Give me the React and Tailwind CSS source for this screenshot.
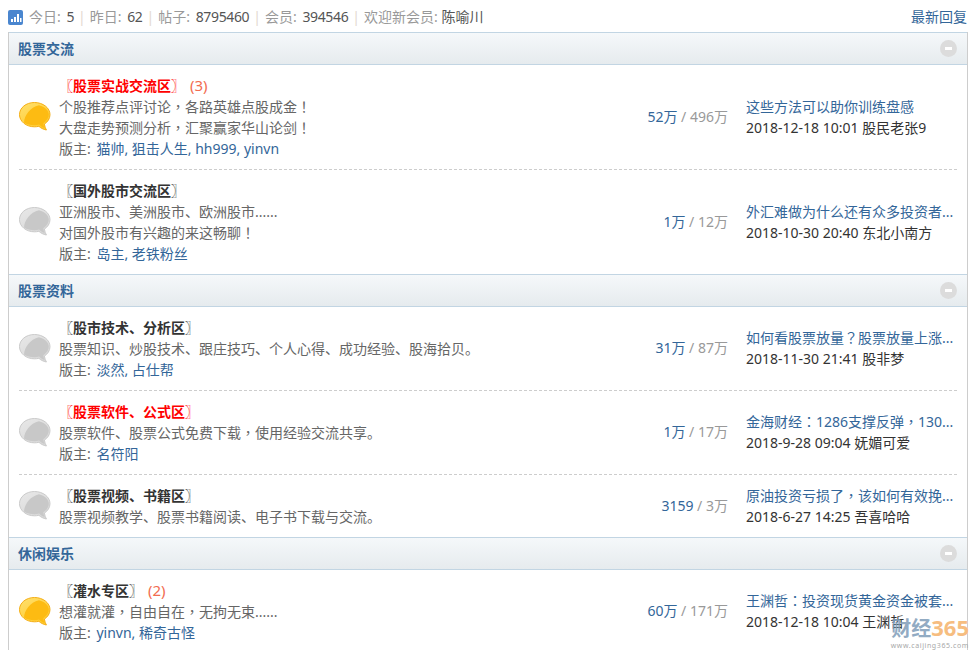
import React from "react";

const FONT = "font-['Noto_Sans','Noto_Sans_CJK_SC',sans-serif]";

const sections = [
  {
    name: "股票交流",
    forums: [
      {
        title: "〖股票实战交流区〗",
        red: true,
        today: "(3)",
        hot: true,
        desc: ["个股推荐点评讨论，各路英雄点股成金！", "大盘走势预测分析，汇聚赢家华山论剑！"],
        mods: "猫帅, 狙击人生, hh999, yinvn",
        threads: "52万",
        posts: "496万",
        last: "这些方法可以助你训练盘感",
        when: "2018-12-18 10:01",
        by: "股民老张9",
      },
      {
        title: "〖国外股市交流区〗",
        desc: ["亚洲股市、美洲股市、欧洲股市......", "对国外股市有兴趣的来这畅聊！"],
        mods: "岛主, 老铁粉丝",
        threads: "1万",
        posts: "12万",
        last: "外汇难做为什么还有众多投资者...",
        when: "2018-10-30 20:40",
        by: "东北小南方",
      },
    ],
  },
  {
    name: "股票资料",
    forums: [
      {
        title: "〖股市技术、分析区〗",
        desc: ["股票知识、炒股技术、跟庄技巧、个人心得、成功经验、股海拾贝。"],
        mods: "淡然, 占仕帮",
        threads: "31万",
        posts: "87万",
        last: "如何看股票放量？股票放量上涨...",
        when: "2018-11-30 21:41",
        by: "股非梦",
      },
      {
        title: "〖股票软件、公式区〗",
        red: true,
        desc: ["股票软件、股票公式免费下载，使用经验交流共享。"],
        mods: "名符阳",
        threads: "1万",
        posts: "17万",
        last: "金海财经：1286支撑反弹，130...",
        when: "2018-9-28 09:04",
        by: "妩媚可爱",
      },
      {
        title: "〖股票视频、书籍区〗",
        desc: ["股票视频教学、股票书籍阅读、电子书下载与交流。"],
        threads: "3159",
        posts: "3万",
        last: "原油投资亏损了，该如何有效挽...",
        when: "2018-6-27 14:25",
        by: "吾喜哈哈",
      },
    ],
  },
  {
    name: "休闲娱乐",
    forums: [
      {
        title: "〖灌水专区〗",
        today: "(2)",
        hot: true,
        desc: ["想灌就灌，自由自在，无拘无束......"],
        mods: "yinvn, 稀奇古怪",
        threads: "60万",
        posts: "171万",
        last: "王渊哲：投资现货黄金资金被套...",
        when: "2018-12-18 10:04",
        by: "王渊哲",
      },
    ],
  },
];

const stats = [
  ["今日", "5"],
  ["昨日", "62"],
  ["帖子", "8795460"],
  ["会员", "394546"],
];

// the reference centres full-width punctuation in its cell, the TC face does too
function Cjk({ text }) {
  return text.split(/([，！？：])/).map((part, i) =>
    i % 2 ? (
      <span key={i} className="font-['Noto_Sans_CJK_TC']">
        {part}
      </span>
    ) : (
      part
    )
  );
}

function Bubble({ hot, id }) {
  const edge = hot ? "#f5ae14" : "#cacaca";
  const light = hot ? "#ffe06e" : "#e8e8e8";
  const mid = hot ? "#ffcb2e" : "#d8d8d8";
  const fill = hot ? "#fdbb12" : "#c8c8c8";
  return (
    <svg width="32" height="29" viewBox="0 0 32 29" className="block">
      <defs>
        <linearGradient id={id} x1="0" y1="0" x2="0.6" y2="1">
          <stop offset="0" stopColor={light} />
          <stop offset="1" stopColor={mid} />
        </linearGradient>
      </defs>
      <path
        d="M15.5 .5C24 .5 31 6 31 12.6c0 3.900-2.300 7.300-5.600 9.500.3 2.200 1 4.300 2 5.900-3-.6-5.700-2-7.500-3.700-1.400.3-2.900.5-4.400.5C7 24.800.5 19.300.5 12.600S7 .5 15.500.5z"
        fill={`url(#${id})`}
        stroke={edge}
      />
      <path
        d="M5 20.500C5.500 13 11 5.500 20 3.200 26 4.800 29.800 8.500 29.800 12.600c0 3.500-2.200 6.500-5.500 8.600.2 1.800.6 3.400 1.200 4.800-2.300-.7-4.100-1.900-5.400-3.400-1.500.4-3 .6-4.600.6-4 0-7.800-1-10.500-2.700z"
        fill={fill}
      />
    </svg>
  );
}

function ForumRow({ forum, divider, id }) {
  return (
    <div className={`flex items-center pt-[10px] pb-[10px] mx-[10px] ${divider ? "border-b border-dashed border-[#cdcdcd]" : ""}`}>
      <div className="w-[40px] shrink-0 -mt-px">
        <Bubble hot={forum.hot} id={id} />
      </div>
      <div className="flex-1 min-w-0 text-[#666]">
        <div>
          <span className={`font-bold ${forum.red ? "text-[#ff0000]" : "text-[#333]"}`}>{forum.title}</span>
          {forum.today && <span className="ml-[5px] text-[#f26c4f] text-[15px]">{forum.today}</span>}
        </div>
        {forum.desc.map((line) => (
          <div key={line}>
            <Cjk text={line} />
          </div>
        ))}
        {forum.mods && (
          <div>
            版主: <span className="ml-[2px] text-[#369]">{forum.mods}</span>
          </div>
        )}
      </div>
      <div className="shrink-0 text-right text-[#999] -mt-[2px]">
        <span className="text-[#369]">{forum.threads}</span> / {forum.posts}
      </div>
      <div className="w-[211px] ml-[18px] shrink-0 -mt-px">
        <div className="text-[#369] whitespace-nowrap">
          <Cjk text={forum.last} />
        </div>
        <div className="text-[#333] whitespace-nowrap">
          {forum.when} {forum.by}
        </div>
      </div>
    </div>
  );
}

export default function App() {
  return (
    <div className={`relative h-[650px] w-[969px] overflow-hidden bg-white text-[14px] leading-[21px] ${FONT}`}>
      {/* top stats bar */}
      <div className="flex h-[32px] items-center justify-between pl-[8px] pr-[2px]">
        <div className="flex items-center">
          <svg width="15" height="15" viewBox="0 0 15 15" className="mr-[6px] mt-[3px]">
            <rect width="15" height="15" rx="2" fill="#4a86cf" />
            <rect x="3" y="9" width="2" height="3" fill="#fff" />
            <rect x="6" y="7" width="2" height="5" fill="#fff" />
            <rect x="9" y="4" width="2" height="8" fill="#fff" />
            <rect x="12" y="8" width="1.500" height="4" fill="#fff" />
          </svg>
          {stats.map(([label, value]) => (
            <span key={label} className="text-[#999]">
              {label}: <span className="ml-[2px] tracking-[-0.35px] text-[#555]">{value}</span>
              <span className="mx-[4px] text-[#e3d9cf]">|</span>
            </span>
          ))}
          <span className="text-[#999]">
            欢迎新会员: <span className="text-[#555]">陈喻川</span>
          </span>
        </div>
        <span className="text-[#369]">最新回复</span>
      </div>

      {/* forum list */}
      <div className="ml-[8px] mr-[1px] border-x border-[#cdcdcd]">
        {sections.map((section, s) => (
          <div key={section.name}>
            <div className="flex h-[33px] items-center justify-between border-y border-[#c2d5e3] bg-gradient-to-b from-[#f5f8fa] to-[#e6ebee] pl-[9px] pr-[10px]">
              <span className="font-bold text-[14px] text-[#369]">{section.name}</span>
              <span className="flex h-[17px] w-[17px] items-center justify-center rounded-full bg-[#dcdcdc]">
                <span className="h-[3px] w-[7px] bg-white" />
              </span>
            </div>
            {section.forums.map((forum, i) => (
              <ForumRow key={forum.title} forum={forum} id={`b${s}${i}`} divider={i < section.forums.length - 1} />
            ))}
          </div>
        ))}
      </div>

      {/* site watermark */}
      <div className="absolute right-0 top-[615px] w-[81px] text-right">
        <div className="whitespace-nowrap text-[20px] leading-[25px] font-bold">
          <span className="text-[#7e9cb8]/85">财经</span>
          <span className="text-[22px] text-[#f6bd80]">365</span>
        </div>
        <div className="mt-[1px] whitespace-nowrap text-[7px] leading-[8px] tracking-[0.6px] text-[#a8a8a8]">www.caijing365.com</div>
      </div>
    </div>
  );
}
